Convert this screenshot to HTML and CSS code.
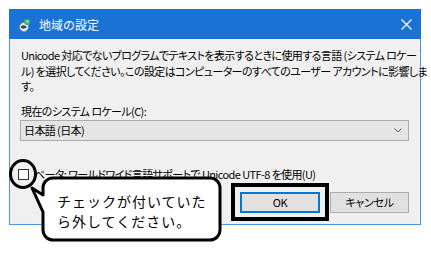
FILE: index.html
```html
<!DOCTYPE html>
<html lang="ja">
<head>
    <meta charset="UTF-8">
    <meta name="viewport" content="width=device-width, initial-scale=1.0">
    <title>地域の設定</title>
    <link rel="stylesheet" href="styles.css">
</head>
<body>
    <div class="page">
        <div class="window">
            <div class="titlebar">
                <svg class="app-icon" width="12" height="14" viewBox="0 0 12 14">
                    <circle cx="5" cy="9" r="4.5" fill="#e8eef4" stroke="#7f8c99" stroke-width="1"/>
                    <path d="M2 8 Q5 6 8 9 Q5 12 2 10 Z" fill="#3c4a57"/>
                    <circle cx="8" cy="4" r="3" fill="#3fb86b"/>
                    <circle cx="8.5" cy="3.5" r="1.3" fill="#9be0b4"/>
                </svg>
                <span class="title">地域の設定</span>
                <svg class="close-icon" width="11" height="11" viewBox="0 0 11 11">
                    <path d="M0.5 0.5 L10.5 10.5 M10.5 0.5 L0.5 10.5" stroke="#fff" stroke-width="1.2"/>
                </svg>
            </div>
            <div class="content">
                <p class="desc">Unicode 対応でないプログラムでテキストを表示するときに使用する言語 (システム ロケー<br>ル) を選択してください。この設定はコンピューターのすべてのユーザー アカウントに影響しま<br>す。</p>
                <div class="field-label">現在のシステム ロケール(C):</div>
                <div class="select">
                    <span>日本語 (日本)</span>
                    <svg width="8" height="5" viewBox="0 0 8 5">
                        <path d="M0.5 0.5 L4 4 L7.5 0.5" fill="none" stroke="#5a5a5a" stroke-width="1"/>
                    </svg>
                </div>
                <div class="check-row">
                    <span class="checkbox"></span>
                    <span class="check-label">ベータ: ワールドワイド言語サポートで Unicode UTF-8 を使用(U)</span>
                </div>
                <div class="buttons">
                    <button class="btn btn-default">OK</button>
                    <button class="btn">キャンセル</button>
                </div>
            </div>
        </div>

        <svg class="callout" width="431" height="258" viewBox="0 0 431 258">
            <path d="M53 178 H210 A10 10 0 0 1 220 188 V230 A10 10 0 0 1 210 240 H53 A10 10 0 0 1 43 230 V212 L32 188 L43 195 V188 A10 10 0 0 1 53 178 Z"
                  fill="#fff" stroke="#000" stroke-width="3" stroke-linejoin="round"/>
            <ellipse cx="23" cy="174" rx="12.5" ry="13.5" fill="none" stroke="#000" stroke-width="3"/>
            <rect x="233" y="185" width="94" height="34" fill="none" stroke="#000" stroke-width="4"/>
        </svg>
        <div class="callout-text">チェックが付いていた<br>ら外してください。</div>
    </div>
</body>
</html>
```

FILE: styles.css
```css
body {
    margin: 0;
    background: #fff;
    font-family: "Noto Sans CJK JP", "Noto Sans", sans-serif;
    font-size: 12px;
    color: #000;
}
.page {
    position: relative;
    width: 431px;
    height: 258px;
    padding: 9px 0 0 9px;
    box-sizing: border-box;
}
.window {
    width: 412px;
    box-sizing: border-box;
    border: 1px solid #4a98e4;
    border-top: none;
    background: #f0f0f0;
}
.titlebar {
    height: 30px;
    margin: 0 -1px;
    background: #1972d4;
    display: flex;
    align-items: center;
    padding: 0 9px 0 10px;
    color: #fff;
}
.app-icon {
    margin-top: 1px;
}
.title {
    margin-left: 8px;
    font-size: 12px;
    flex: 1;
}
.content {
    padding: 9px 11px 11px 10px;
    font-size: 11px;
    letter-spacing: -0.6px;
    font-feature-settings: "palt";
}
.desc {
    margin: 0;
    padding-left: 1px;
    line-height: 15.5px;
    white-space: nowrap;
}
.field-label {
    margin-top: 9px;
    padding-left: 1px;
    line-height: 15px;
}
.select {
    margin-top: 1px;
    height: 21px;
    box-sizing: border-box;
    border: 1px solid #adadad;
    background: #e5e5e5;
    display: flex;
    align-items: center;
    justify-content: space-between;
    padding: 0 6px 0 3px;
}
.check-row {
    margin-top: 26px;
    height: 15px;
    display: flex;
    align-items: center;
    margin-left: -2px;
}
.checkbox {
    width: 11px;
    height: 11px;
    box-sizing: border-box;
    border: 1px solid #333;
    background: #fff;
}
.check-label {
    margin-left: 5px;
    white-space: nowrap;
}
.buttons {
    margin-top: 10px;
    display: flex;
    justify-content: flex-end;
    gap: 10px;
}
.btn {
    width: 79px;
    height: 21px;
    box-sizing: border-box;
    border: 1px solid #adadad;
    background: #e1e1e1;
    font-family: inherit;
    font-size: 11px;
    letter-spacing: -0.3px;
    padding: 0;
    font-feature-settings: "palt";
}
.btn-default {
    width: 80px;
    border: 2px solid #0078d7;
}
.callout {
    position: absolute;
    left: 0;
    top: 0;
    pointer-events: none;
}
.callout-text {
    position: absolute;
    left: 57px;
    top: 191px;
    font-size: 14px;
    letter-spacing: 1px;
    line-height: 20px;
    white-space: nowrap;
}
```
